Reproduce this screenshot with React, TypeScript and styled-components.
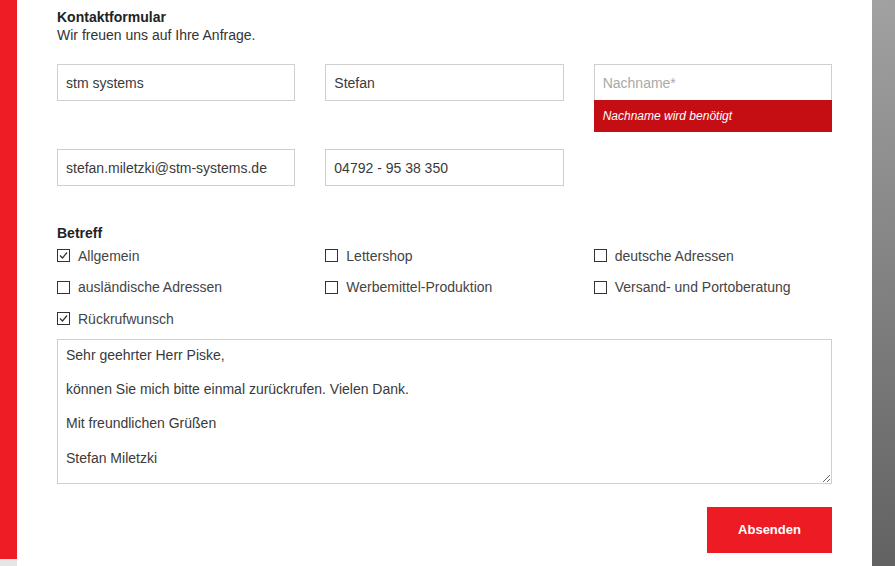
import React from "react";
import styled, { createGlobalStyle } from "styled-components";

const GlobalStyle = createGlobalStyle`
  html, body {
    margin: 0;
    padding: 0;
    background: #ffffff;
  }
  body {
    font-family: "Liberation Sans", Arial, sans-serif;
    color: #333333;
  }
`;

const Page = styled.div`
  display: flex;
  width: 895px;
  height: 566px;
  overflow: hidden;
`;

const LeftBar = styled.div`
  width: 17px;
  flex: none;
  background: linear-gradient(to bottom, #ee1c25 0, #ee1c25 559px, #e6e6e6 559px);
`;

const RightBar = styled.div`
  width: 23px;
  flex: none;
  background: linear-gradient(to bottom, #a1a1a1, #626262);
`;

const Main = styled.main`
  flex: 1;
  padding: 8px 0 0 40px;
`;

const Form = styled.form`
  width: 775px;
`;

const Title = styled.h2`
  margin: 0;
  font-size: 14px;
  line-height: 18px;
  font-weight: bold;
  color: #222222;
`;

const Intro = styled.p`
  margin: 0 0 20px;
  font-size: 14px;
  line-height: 18px;
  color: #333333;
`;

const FieldGrid = styled.div`
  display: grid;
  grid-template-columns: repeat(3, 1fr);
  column-gap: 30px;
  row-gap: 17px;
  align-items: start;
`;

const Field = styled.div`
  display: flex;
  flex-direction: column;
`;

const Input = styled.input`
  box-sizing: border-box;
  width: 100%;
  height: 37px;
  padding: 0 8px;
  border: 1px solid #cfcfcf;
  background: #ffffff;
  font-family: "Liberation Sans", Arial, sans-serif;
  font-size: 14px;
  color: #3a3a3a;
  outline: none;

  &::placeholder {
    color: #a9a9a9;
  }
`;

const Error = styled.div`
  height: 32px;
  margin-top: -1px;
  display: flex;
  align-items: center;
  padding-left: 9px;
  background: #c50e14;
  color: #ffffff;
  font-size: 12px;
  font-style: italic;
`;

const SectionLabel = styled.h3`
  margin: 38px 0 0;
  font-size: 14px;
  line-height: 18px;
  font-weight: bold;
  color: #222222;
`;

const Options = styled.div`
  display: grid;
  grid-template-columns: repeat(3, 1fr);
  column-gap: 30px;
  grid-auto-rows: 31.5px;
  margin-top: -2px;
`;

const Option = styled.label`
  display: flex;
  align-items: center;
  gap: 8px;
  font-size: 14px;
  color: #444444;
`;

const Box = styled.span`
  box-sizing: border-box;
  width: 13px;
  height: 13px;
  border: 1px solid #333333;
  background: #ffffff;
  display: flex;
  align-items: center;
  justify-content: center;
  flex: none;
`;

const Message = styled.textarea`
  display: block;
  box-sizing: border-box;
  width: 100%;
  height: 145px;
  margin-top: 4px;
  padding: 7px 8px;
  border: 1px solid #cfcfcf;
  font-family: "Liberation Sans", Arial, sans-serif;
  font-size: 14px;
  line-height: 17.2px;
  color: #3a3a3a;
  outline: none;
  resize: vertical;
`;

const Actions = styled.div`
  display: flex;
  justify-content: flex-end;
  margin-top: 23px;
`;

const Submit = styled.button`
  width: 125px;
  height: 46px;
  border: none;
  background: #ed1c24;
  color: #ffffff;
  font-family: "Liberation Sans", Arial, sans-serif;
  font-size: 13px;
  font-weight: bold;
  cursor: pointer;
`;

const Check = ({ checked }: { checked: boolean }) => (
  <Box>
    {checked && (
      <svg width="11" height="11" viewBox="0 0 11 11">
        <path d="M2 5.5 L4.5 8 L9 2.5" fill="none" stroke="#333" strokeWidth="1.2" />
      </svg>
    )}
  </Box>
);

const options = [
  { label: "Allgemein", checked: true },
  { label: "Lettershop", checked: false },
  { label: "deutsche Adressen", checked: false },
  { label: "ausländische Adressen", checked: false },
  { label: "Werbemittel-Produktion", checked: false },
  { label: "Versand- und Portoberatung", checked: false },
  { label: "Rückrufwunsch", checked: true },
];

const message =
  "Sehr geehrter Herr Piske,\n\nkönnen Sie mich bitte einmal zurückrufen. Vielen Dank.\n\nMit freundlichen Grüßen\n\nStefan Miletzki";

export default function App() {
  return (
    <>
      <GlobalStyle />
      <Page>
        <LeftBar />
        <Main>
          <Form onSubmit={(e) => e.preventDefault()}>
            <Title>Kontaktformular</Title>
            <Intro>Wir freuen uns auf Ihre Anfrage.</Intro>
            <FieldGrid>
              <Field>
                <Input defaultValue="stm systems" />
              </Field>
              <Field>
                <Input defaultValue="Stefan" />
              </Field>
              <Field>
                <Input placeholder="Nachname*" />
                <Error>Nachname wird benötigt</Error>
              </Field>
              <Field>
                <Input defaultValue="stefan.miletzki@stm-systems.de" />
              </Field>
              <Field>
                <Input defaultValue="04792 - 95 38 350" />
              </Field>
            </FieldGrid>
            <SectionLabel>Betreff</SectionLabel>
            <Options>
              {options.map((o) => (
                <Option key={o.label}>
                  <Check checked={o.checked} />
                  {o.label}
                </Option>
              ))}
            </Options>
            <Message defaultValue={message} />
            <Actions>
              <Submit type="submit">Absenden</Submit>
            </Actions>
          </Form>
        </Main>
        <RightBar />
      </Page>
    </>
  );
}
